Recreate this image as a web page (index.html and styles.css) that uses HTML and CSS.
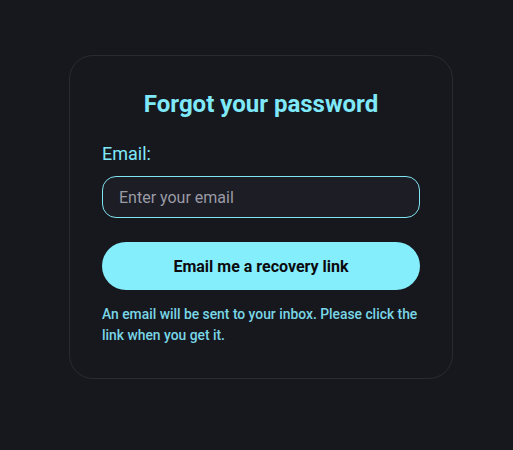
FILE: index.html
```html
<!DOCTYPE html>
<html lang="en">
<head>
<meta charset="utf-8">
<title>Forgot your password</title>
<link rel="stylesheet" href="styles.css">
</head>
<body>
<main class="page">
  <form class="card" onsubmit="return false">
    <h1 class="title">Forgot your password</h1>
    <label class="label" for="email">Email:</label>
    <input class="input" id="email" type="email" placeholder="Enter your email">
    <button class="button" type="submit">Email me a recovery link</button>
    <p class="note">An email will be sent to your inbox. Please click the link when you get it.</p>
  </form>
</main>
</body>
</html>
```
FILE: styles.css
```css
* { box-sizing: border-box; }
html, body {
  margin: 0;
  padding: 0;
  background: #17181e;
  font-family: Roboto, "Noto Sans", sans-serif;
}
.page {
  min-height: 450px;
  display: flex;
  justify-content: center;
  align-items: flex-start;
  padding: 55px 0 0 9px;
}
.card {
  width: 384px;
  border: 1px solid #2a2b2f;
  border-radius: 24px;
  background: #17181e;
  padding: 32px 32px 32px;
  display: flex;
  flex-direction: column;
}
.title {
  margin: 0;
  font-size: 24px;
  line-height: 32px;
  font-weight: 700;
  color: #7fe9fa;
  text-align: center;
}
.label {
  margin-top: 24px;
  font-size: 18px;
  line-height: 20px;
  color: #7fe9fa;
}
.input {
  margin-top: 12px;
  height: 42px;
  border: 1px solid #7fe3f2;
  border-radius: 14px;
  background: #1c1d25;
  padding: 0 16px;
  font-family: inherit;
  font-size: 16px;
  color: #e6e6ea;
  outline: none;
}
.input::placeholder { color: #9b9ba5; }
.button {
  margin-top: 24px;
  height: 48px;
  border: none;
  border-radius: 24px;
  background: #84eefd;
  color: #0b0b0d;
  font-family: inherit;
  font-size: 16px;
  font-weight: 700;
  cursor: pointer;
}
.note {
  margin: 14px 0 0;
  font-size: 13.85px;
  line-height: 21px;
  font-weight: 500;
  color: #7ad6e6;
}
```
